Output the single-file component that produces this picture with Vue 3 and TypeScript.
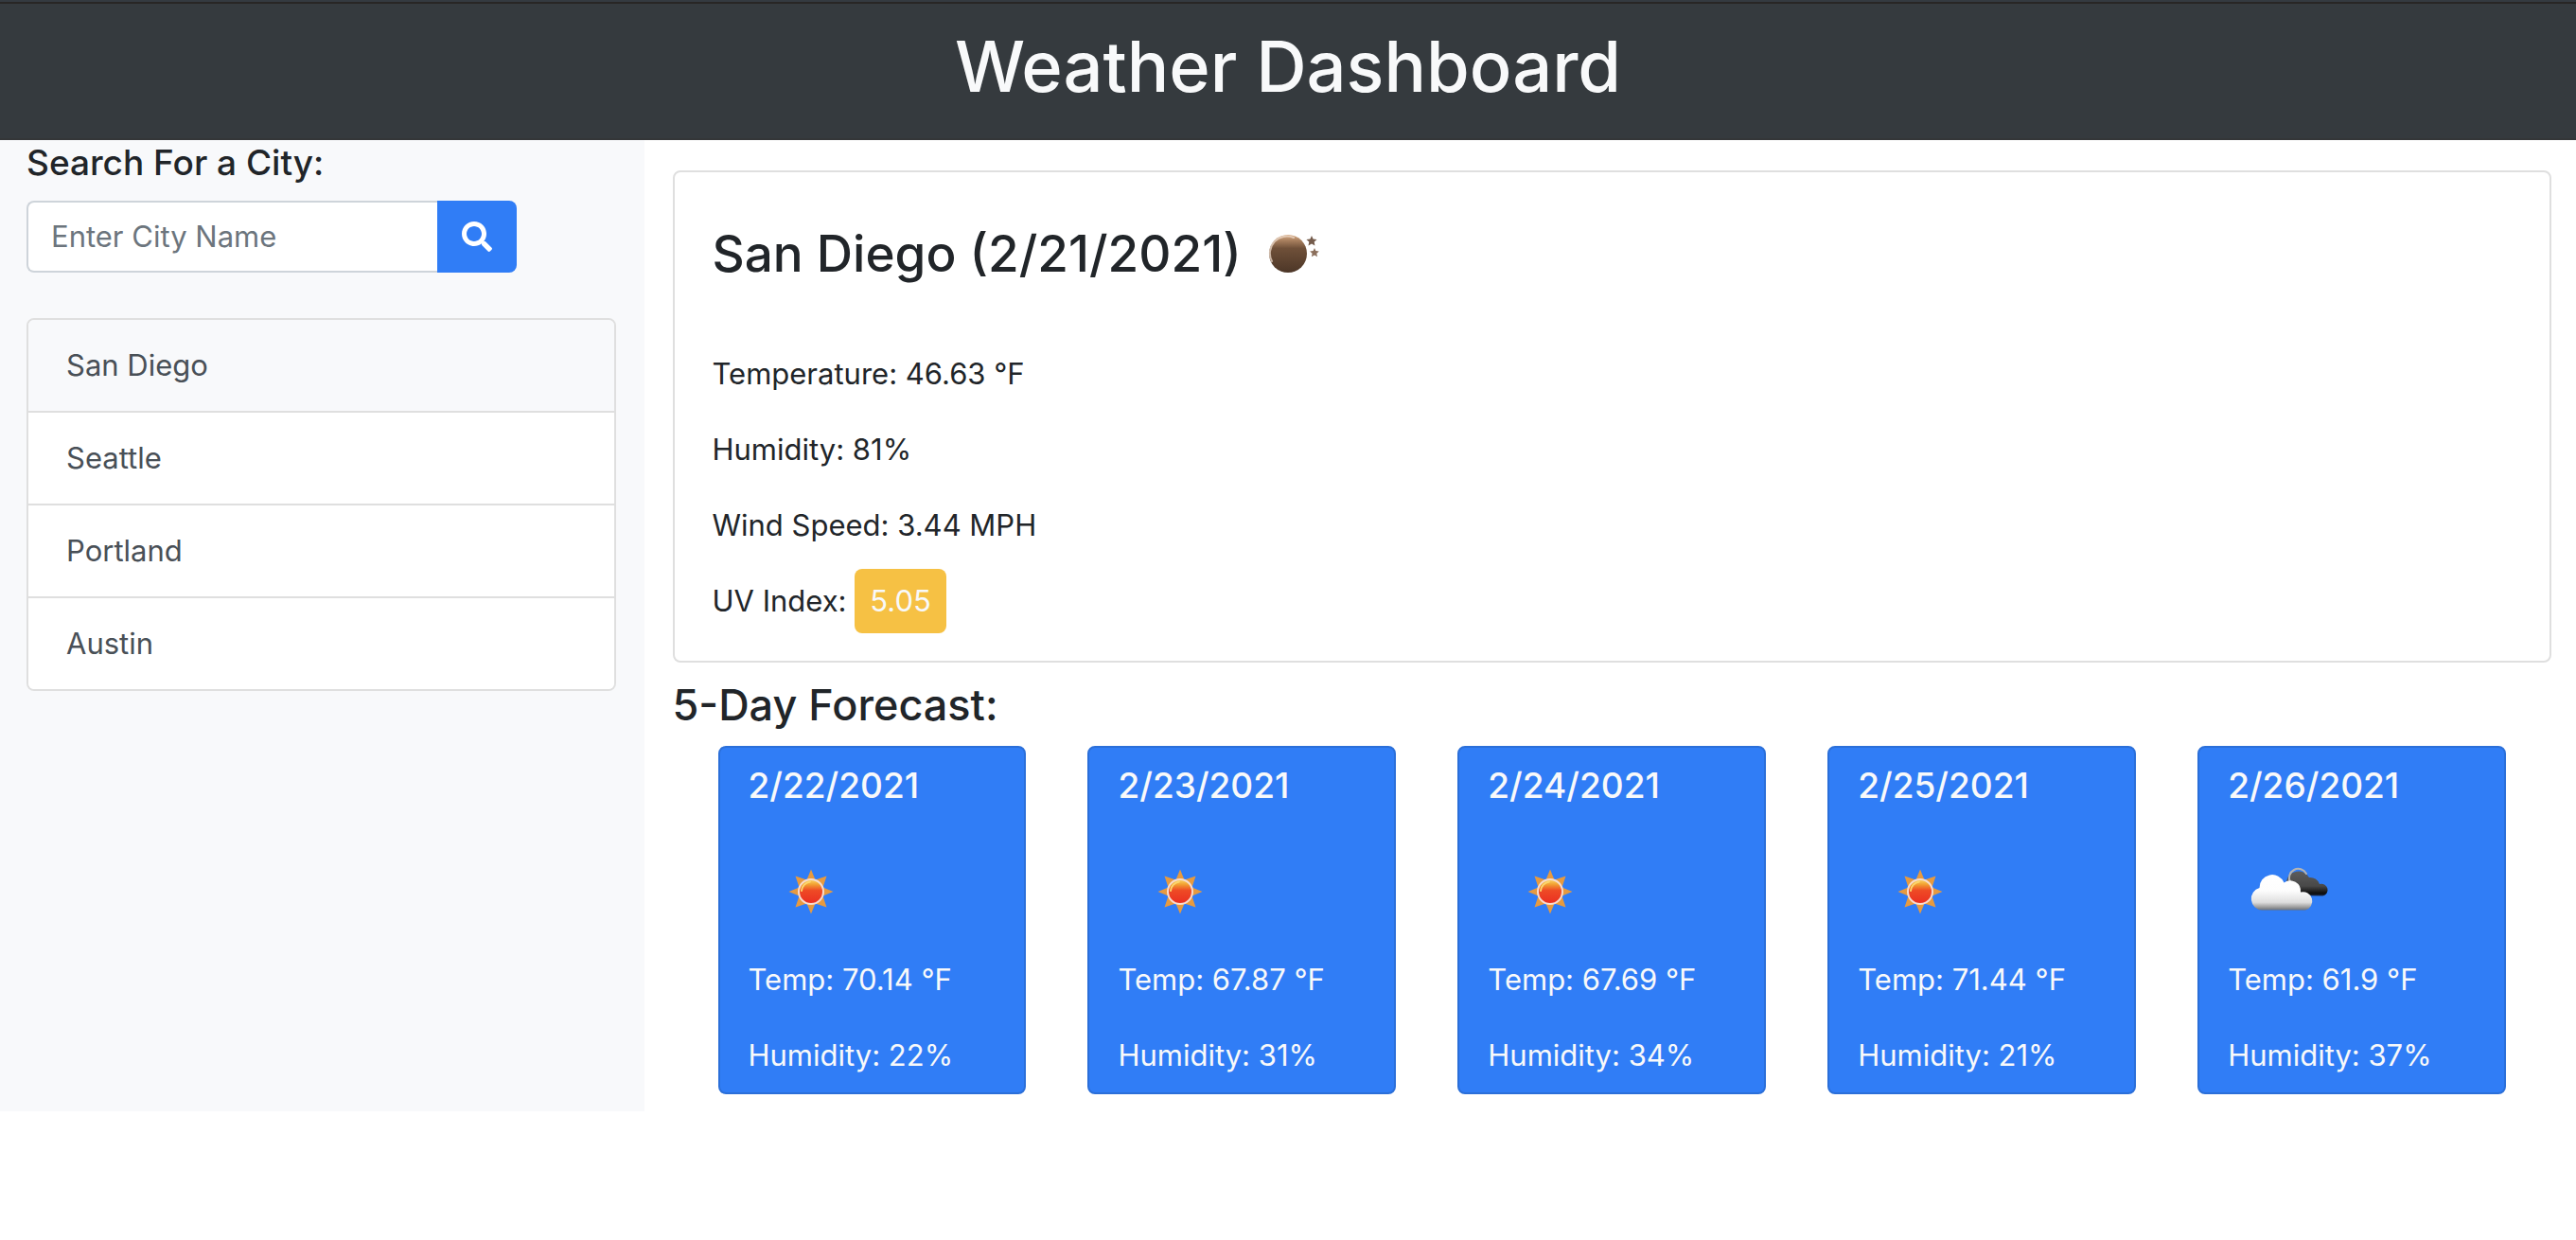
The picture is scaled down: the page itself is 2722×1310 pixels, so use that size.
<script setup lang="ts">
import { ref } from 'vue'

interface Day {
  date: string
  icon: 'sun' | 'clouds'
  temp: string
  humidity: number
}

const query = ref('')
const cities = ref<string[]>(['San Diego', 'Seattle', 'Portland', 'Austin'])
const active = ref('San Diego')

const forecast: Day[] = [
  { date: '2/22/2021', icon: 'sun', temp: '70.14', humidity: 22 },
  { date: '2/23/2021', icon: 'sun', temp: '67.87', humidity: 31 },
  { date: '2/24/2021', icon: 'sun', temp: '67.69', humidity: 34 },
  { date: '2/25/2021', icon: 'sun', temp: '71.44', humidity: 21 },
  { date: '2/26/2021', icon: 'clouds', temp: '61.9', humidity: 37 },
]

function search() {
  const name = query.value.trim()
  if (!name) return
  if (!cities.value.includes(name)) cities.value.push(name)
  active.value = name
  query.value = ''
}
</script>

<template>
  <div class="page">
    <svg class="defs" aria-hidden="true">
      <defs>
        <linearGradient id="sun-core" x1="0" y1="0" x2="0" y2="1">
          <stop offset="0" stop-color="#fbd866" />
          <stop offset="0.2" stop-color="#f2a233" />
          <stop offset="0.45" stop-color="#ee4a25" />
          <stop offset="1" stop-color="#ea2e22" />
        </linearGradient>
        <linearGradient id="moon-core" x1="0" y1="0" x2="0" y2="1">
          <stop offset="0" stop-color="#d8ab86" />
          <stop offset="0.15" stop-color="#a9805f" />
          <stop offset="0.36" stop-color="#6f5039" />
          <stop offset="1" stop-color="#4c3627" />
        </linearGradient>
        <linearGradient id="cloud-light" x1="0" y1="0" x2="0" y2="1">
          <stop offset="0" stop-color="#ffffff" />
          <stop offset="0.45" stop-color="#fdfdfd" />
          <stop offset="0.78" stop-color="#dedede" />
          <stop offset="0.9" stop-color="#a5a5a5" />
          <stop offset="1" stop-color="#6b7078" />
        </linearGradient>
        <linearGradient id="cloud-dark" x1="0" y1="0" x2="0" y2="1">
          <stop offset="0" stop-color="#5c5c5c" />
          <stop offset="0.6" stop-color="#484848" />
          <stop offset="0.9" stop-color="#0c0c0c" />
          <stop offset="1" stop-color="#1c2c4c" />
        </linearGradient>
      </defs>
    </svg>

    <header class="top">
      <h1>Weather Dashboard</h1>
    </header>

    <div class="columns">
      <aside class="side">
        <h2><label for="city">Search For a City:</label></h2>
        <form class="search" @submit.prevent="search">
          <input id="city" v-model="query" type="text" placeholder="Enter City Name" />
          <button type="submit" aria-label="Search">
            <svg viewBox="0 0 512 512" width="32" height="32" fill="currentColor" aria-hidden="true">
              <path d="M505 442.700L405.300 343c-4.500-4.500-10.600-7-17-7H372c27.600-35.300 44-79.700 44-128C416 93.100 322.900 0 208 0S0 93.100 0 208s93.100 208 208 208c48.300 0 92.700-16.400 128-44v16.300c0 6.400 2.500 12.500 7 17l99.700 99.700c9.400 9.400 24.600 9.400 33.900 0l28.300-28.300c9.400-9.400 9.400-24.600.1-34zM208 336c-70.700 0-128-57.200-128-128 0-70.700 57.200-128 128-128 70.700 0 128 57.200 128 128 0 70.700-57.200 128-128 128z" />
            </svg>
          </button>
        </form>
        <ul class="cities">
          <li v-for="city in cities" :key="city">
            <button type="button" :class="{ active: city === active }" @click="active = city">{{ city }}</button>
          </li>
        </ul>
      </aside>

      <main class="main">
        <section class="today">
          <div class="place">
            <h2>San Diego (2/21/2021)</h2>
            <svg class="weather" viewBox="0 0 100 100" aria-hidden="true">
              <circle cx="45" cy="50" r="20" fill="url(#moon-core)" />
              <path d="M28 58A18 18 0 0 1 51 33" fill="none" stroke="#ecd9c9" stroke-width="2" stroke-linecap="round" opacity="0.75" />
              <path d="M70 31l1.600 3.500 3.900.4-2.800 2.600.7 4-3.400-2-3.500 2 .8-4-2.900-2.600 4-.4z" fill="#745b4b" />
              <path d="M73 44l1.400 3.100 3.400.4-2.500 2.200.7 3.500-3-1.700-3.100 1.700.7-3.500-2.500-2.200 3.500-.4z" fill="#8b6f5c" />
            </svg>
          </div>
          <p>Temperature: 46.63 °F</p>
          <p>Humidity: 81%</p>
          <p>Wind Speed: 3.44 MPH</p>
          <p>UV Index: <span class="uv">5.05</span></p>
        </section>

        <h2 class="heading">5-Day Forecast:</h2>
        <div class="days">
          <article v-for="day in forecast" :key="day.date" class="day">
            <h3>{{ day.date }}</h3>
            <svg v-if="day.icon === 'sun'" class="weather" viewBox="0 0 100 100" aria-hidden="true">
              <path d="M50 26.500L54.500 37.500 66.500 33.500 62.500 45.500 73.500 50 62.500 54.500 66.500 66.500 54.500 62.500 50 73.500 45.500 62.500 33.500 66.500 37.500 54.500 26.500 50 37.500 45.500 33.500 33.500 45.500 37.500z" fill="#e69a40" />
              <circle cx="50" cy="50" r="13" fill="url(#sun-core)" stroke="#f6dcd0" stroke-width="2" />
              <path d="M40 49A10.500 10.500 0 0 1 49 39.500" fill="none" stroke="#fbd56c" stroke-width="2" stroke-linecap="round" />
            </svg>
            <svg v-else class="weather" viewBox="0 0 100 100" aria-hidden="true">
              <path d="M46 54V39A13 13 0 0 1 70 35A10.500 10.500 0 0 1 81 42A6.500 6.500 0 1 1 84.500 54.500z" fill="url(#cloud-dark)" />
              <path d="M50 40A9.500 9.500 0 0 1 67 31" fill="none" stroke="#b4b4b4" stroke-width="2" stroke-linecap="round" />
              <path d="M20 69.500A12 12 0 0 1 17.500 46A13.500 13.500 0 0 1 43.500 40.500A11 11 0 0 1 61 50.500A9.500 9.500 0 1 1 66 69.500z" fill="url(#cloud-light)" />
            </svg>
            <p>Temp: {{ day.temp }} °F</p>
            <p>Humidity: {{ day.humidity }}%</p>
          </article>
        </div>
      </main>
    </div>
  </div>
</template>

<style>
body {
  margin: 0;
  background: #fff;
}
</style>

<style scoped>
.page {
  font-family: Inter, 'Liberation Sans', sans-serif;
  font-size: 31px;
  line-height: 50px;
  color: #212529;
}
.page * {
  box-sizing: border-box;
}
h1,
h2,
h3,
p,
ul {
  margin: 0;
  padding: 0;
}
h1,
h2,
h3 {
  font-weight: 500;
}
.defs {
  position: absolute;
  width: 0;
  height: 0;
}
.top {
  padding: 20px 30px 30px;
  border-top: 2px solid #343a40;
  background: #353a3e;
  box-shadow: inset 0 2px #282625, inset 0 -2px #343638;
  text-align: center;
}
.top h1 {
  font-size: 74px;
  line-height: 96px;
  color: #f8f9fa;
}
.columns {
  display: flex;
}
.side {
  flex: 0 0 25%;
  padding: 0 30px 0 28px;
  background: #f8f9fb;
}
.side h2 {
  margin-bottom: 16px;
  font-size: 37px;
  line-height: 48px;
}
.search {
  display: flex;
  width: 518px;
  max-width: 100%;
  height: 76px;
  margin-bottom: 48px;
}
.search input {
  flex: 1;
  min-width: 0;
  padding: 0 24px;
  border: 2px solid #ced4da;
  border-right: 0;
  border-radius: 8px 0 0 8px;
  background: #fff;
  font: inherit;
  color: #495057;
  outline: none;
}
.search input::placeholder {
  color: #6c757d;
  opacity: 1;
}
.search button {
  display: flex;
  align-items: center;
  justify-content: center;
  width: 84px;
  padding: 0;
  border: 0;
  border-radius: 0 8px 8px 0;
  background: #307df6;
  color: #fff;
  cursor: pointer;
}
.cities {
  overflow: hidden;
  border: 2px solid #dfdfdf;
  border-radius: 8px;
  list-style: none;
}
.cities li + li {
  border-top: 2px solid #dfdfdf;
}
.cities button {
  display: block;
  width: 100%;
  height: 96px;
  padding: 0 40px;
  border: 0;
  background: #fff;
  font: inherit;
  color: #495057;
  text-align: left;
  cursor: pointer;
}
.cities button.active {
  background: #f8f9fb;
}
.main {
  flex: 1;
  min-width: 0;
  padding: 32px 26px 18px 30px;
}
.today {
  padding: 42px 40px 38px;
  border: 2px solid #dfdfdf;
  border-radius: 8px;
}
.place {
  display: flex;
  align-items: center;
  gap: 4px;
  height: 88px;
  margin-bottom: 58px;
}
.place h2 {
  font-size: 53px;
}
.weather {
  display: block;
  flex: none;
  width: 100px;
  height: 100px;
}
p + p {
  margin-top: 30px;
}
.uv {
  display: inline-block;
  margin: -9px 0;
  padding: 9px 16px;
  border-radius: 8px;
  background: #f6c144;
  color: #f8f9fa;
}
.heading {
  margin: 16px 0 14px;
  font-size: 45px;
  line-height: 58px;
}
.days {
  display: flex;
  gap: 65px;
  padding: 0 48px;
}
.day {
  flex: 1;
  min-width: 0;
  padding: 16px 30px 14px;
  border: 2px solid #2b6fd9;
  border-radius: 8px;
  background: #307df6;
  color: #f8f9fa;
}
.day h3 {
  font-size: 37px;
  line-height: 48px;
}
.day .weather {
  margin: 38px 16px 18px;
}
</style>
